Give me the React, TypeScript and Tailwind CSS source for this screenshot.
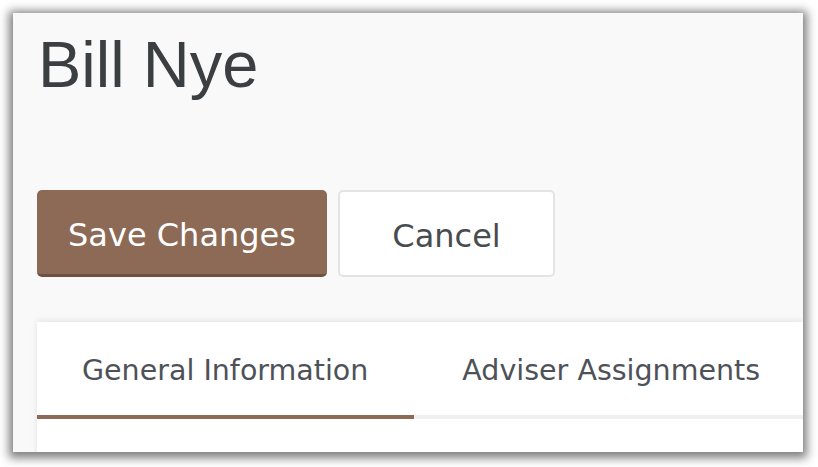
import React from 'react';

const tabs = ['General Information', 'Adviser Assignments'];

export default function App() {
  const [active, setActive] = React.useState(0);

  return (
    <div className="w-[818px] h-[467px] bg-white pl-[13px] pt-[13px] overflow-hidden">
      <div className="w-[790px] h-[439px] bg-[#f9f9f9] overflow-hidden pl-[24px] pt-[19px] shadow-[0_2px_9px_4px_rgba(0,0,0,0.5)]">
        <h1 className="ml-[1px] text-[65px] leading-none text-[#3c3f42] font-['Liberation_Sans',Arial,sans-serif]">
          Bill Nye
        </h1>

        <div className="mt-[93px] flex gap-[11px] font-['DejaVu_Sans',Verdana,sans-serif] text-[32px]">
          <button className="w-[290px] h-[87px] pt-[6px] rounded-[5px] bg-[#8d6a55] border-b-[3px] border-[#6e5140] text-white">
            Save Changes
          </button>
          <button className="w-[217px] h-[87px] pt-[5px] rounded-[5px] bg-white border-2 border-[#e4e4e4] text-[#494c4e]">
            Cancel
          </button>
        </div>

        <div className="mt-[45px] bg-white h-[200px] shadow-[0_-1px_6px_rgba(0,0,0,0.1)]">
          <div className="flex border-b-4 border-[#efefef] font-['DejaVu_Sans',Verdana,sans-serif] text-[28.5px] text-[#4e5258]">
            {tabs.map((t, i) => (
              <button
                key={t}
                onClick={() => setActive(i)}
                className={
                  i === active
                    ? 'shrink-0 whitespace-nowrap h-[97px] pl-[45px] pr-[46px] pt-[6px] border-b-4 border-[#8d6a55] mb-[-4px]'
                    : 'shrink-0 whitespace-nowrap h-[97px] pl-[48px] pr-[46px] pt-[6px] border-b-4 border-transparent mb-[-4px]'
                }
              >
                {t}
              </button>
            ))}
          </div>
        </div>
      </div>
    </div>
  );
}
